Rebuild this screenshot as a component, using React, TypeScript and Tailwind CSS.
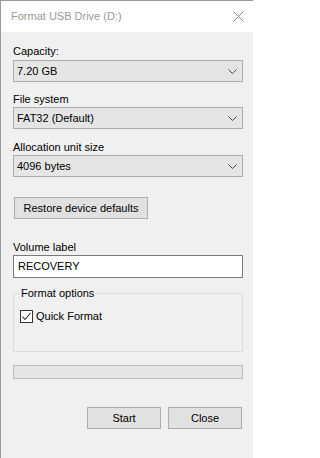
import React from "react";

function Chevron() {
  return (
    <svg width="9" height="5" viewBox="0 0 9 5" className="block">
      <polyline points="0.5,0.5 4.5,4.5 8.5,0.5" fill="none" stroke="#444" strokeWidth="1" />
    </svg>
  );
}

function Combo({ value }: { value: string }) {
  return (
    <div className="flex h-[22px] w-[230px] items-center justify-between border border-[#adadad] bg-[#e5e5e5] pl-[3px] pr-[5px]">
      <span className="leading-[16px]">{value}</span>
      <Chevron />
    </div>
  );
}

function Btn({ label, className }: { label: string; className?: string }) {
  return (
    <div
      className={
        "flex h-[22px] items-center justify-center border border-[#adadad] bg-[#e1e1e1] leading-[16px] " +
        (className ?? "")
      }
    >
      {label}
    </div>
  );
}

export default function App() {
  return (
    <div className="h-[458px] w-[253px] overflow-hidden border-l border-t border-[#9a9a9a] bg-[#f0f0f0] font-['Liberation_Sans',Arial,sans-serif] text-[11px] text-black">
      <div className="flex h-[31px] items-center justify-between bg-white pl-[10px] pr-[9px]">
        <span className="text-[11px] text-[#999999]">Format USB Drive (D:)</span>
        <svg width="11" height="11" viewBox="0 0 11 11" className="block">
          <line x1="0.5" y1="0.5" x2="10.5" y2="10.5" stroke="#888" strokeWidth="1" />
          <line x1="10.5" y1="0.5" x2="0.5" y2="10.5" stroke="#888" strokeWidth="1" />
        </svg>
      </div>
      <div className="flex flex-col pl-[12px]">
        <div className="mt-[11px] h-[16px] leading-[16px]">Capacity:</div>
        <div className="mt-[1px]">
          <Combo value="7.20 GB" />
        </div>
        <div className="mt-[9px] h-[16px] leading-[16px]">File system</div>
        <div>
          <Combo value="FAT32 (Default)" />
        </div>
        <div className="mt-[10px] h-[16px] leading-[16px]">Allocation unit size</div>
        <div>
          <Combo value="4096 bytes" />
        </div>
        <div className="mt-[20px] pl-[1px]">
          <Btn label="Restore device defaults" className="w-[134px]" />
        </div>
        <div className="mt-[20px] h-[16px] leading-[16px]">Volume label</div>
        <div className="flex h-[23px] w-[230px] items-center border border-[#7a7a7a] bg-white pl-[4px]">
          RECOVERY
        </div>
        <div className="relative mt-[15px] h-[59px] w-[230px] border border-[#dcdcdc]">
          <span className="absolute left-[6px] top-[-9px] bg-[#f0f0f0] px-[1px] leading-[16px]">
            Format options
          </span>
          <div className="absolute left-[6px] top-[14px] flex items-center">
            <div className="flex h-[13px] w-[13px] items-center justify-center border border-[#333333] bg-white">
              <svg width="11" height="11" viewBox="0 0 11 11" className="block">
                <polyline points="1.5,5.5 4,8.5 9.5,2" fill="none" stroke="#333" strokeWidth="1.1" />
              </svg>
            </div>
            <span className="ml-[3px] leading-[16px]">Quick Format</span>
          </div>
        </div>
        <div className="mt-[13px] h-[14px] w-[230px] border border-[#bcbcbc] bg-[#e6e6e6]" />
        <div className="mt-[28px] flex w-[230px] justify-end gap-[7px] pr-[1px]">
          <Btn label="Start" className="w-[74px]" />
          <Btn label="Close" className="w-[74px]" />
        </div>
      </div>
    </div>
  );
}
